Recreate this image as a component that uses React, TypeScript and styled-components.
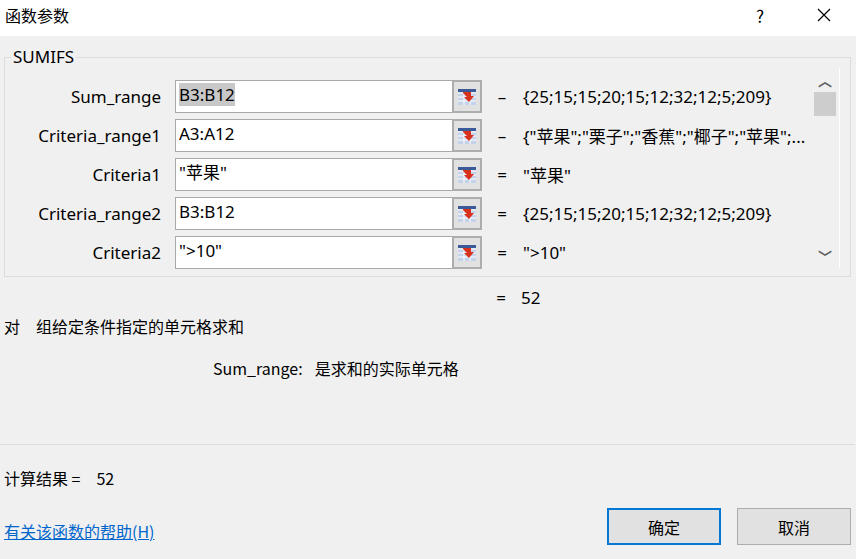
import React from "react";
import styled, { createGlobalStyle } from "styled-components";

const Global = createGlobalStyle`
  body { margin: 0; font-family: "Noto Sans CJK SC", "Noto Sans", sans-serif; color: #000; }
`;

const rows = [
  { label: "Sum_range", value: "B3:B12", sel: true, eq: "–", result: "{25;15;15;20;15;12;32;12;5;209}" },
  { label: "Criteria_range1", value: "A3:A12", eq: "–", result: "{\"苹果\";\"栗子\";\"香蕉\";\"椰子\";\"苹果\";..." },
  { label: "Criteria1", value: "\"苹果\"", eq: "=", result: "\"苹果\"" },
  { label: "Criteria_range2", value: "B3:B12", eq: "=", result: "{25;15;15;20;15;12;32;12;5;209}" },
  { label: "Criteria2", value: "\">10\"", eq: "=", result: "\">10\"" },
];

function RefIcon() {
  return (
    <svg width="20" height="20" viewBox="0 0 20 20">
      <rect x="1" y="2" width="18" height="16" fill="#c5d3ea" />
      <rect x="1" y="2" width="18" height="3" fill="#3a5a98" />
      {[6, 10, 14].map((y) => (
        <line key={y} x1="1" x2="19" y1={y} y2={y} stroke="#fff" />
      ))}
      {[7, 13].map((x) => (
        <line key={x} x1={x} x2={x} y1="5" y2="18" stroke="#fff" />
      ))}
      <path d="M6 5 L14 5 L14 9 L17 9 L12 15 L7 10 L10 10 L6 6 Z" fill="#d8321e" />
    </svg>
  );
}

export default function App() {
  return (
    <Dialog>
      <Global />
      <TitleBar>
        <Title>函数参数</Title>
        <TitleButtons>
          <TitleBtn>?</TitleBtn>
          <TitleBtn>
            <svg width="14" height="14" viewBox="0 0 14 14">
              <path d="M1 1 L13 13 M13 1 L1 13" stroke="#000" strokeWidth="1.2" />
            </svg>
          </TitleBtn>
        </TitleButtons>
      </TitleBar>
      <Body>
        <Group>
          <Legend>SUMIFS</Legend>
          <GroupInner>
            <Rows>
              {rows.map((r) => (
                <Row key={r.label}>
                  <Label>{r.label}</Label>
                  <InputBox>
                    <InputText $sel={r.sel}>{r.value}</InputText>
                  </InputBox>
                  <RefButton>
                    <RefIcon />
                  </RefButton>
                  <Eq>{r.eq}</Eq>
                  <Result>{r.result}</Result>
                </Row>
              ))}
            </Rows>
            <Scroll>
              <Arrow>︿</Arrow>
              <Thumb />
              <Spacer />
              <Arrow>﹀</Arrow>
            </Scroll>
          </GroupInner>
        </Group>
        <Total>
          <Eq>=</Eq>
          <span>52</span>
        </Total>
        <Desc>对　组给定条件指定的单元格求和</Desc>
        <ArgDesc>
          <span>Sum_range:</span>
          <span>是求和的实际单元格</span>
        </ArgDesc>
        <Sep />
        <CalcResult>计算结果 =　52</CalcResult>
        <Footer>
          <HelpLink>有关该函数的帮助(H)</HelpLink>
          <Buttons>
            <Btn $primary>确定</Btn>
            <Btn>取消</Btn>
          </Buttons>
        </Footer>
      </Body>
    </Dialog>
  );
}

const Dialog = styled.div`
  width: 856px;
  height: 559px;
  background: #f0f0f0;
  display: flex;
  flex-direction: column;
  overflow: hidden;
`;

const TitleBar = styled.div`
  height: 36px;
  background: #fff;
  display: flex;
  align-items: center;
  justify-content: space-between;
`;

const Title = styled.div`
  font-size: 16px;
  padding-left: 5px;
  margin-top: -6px;
`;

const TitleButtons = styled.div`
  display: flex;
  height: 100%;
  margin-top: -6px;
`;

const TitleBtn = styled.div`
  width: 64px;
  display: flex;
  align-items: center;
  justify-content: center;
  font-size: 17px;
`;

const Body = styled.div`
  flex: 1;
  display: flex;
  flex-direction: column;
  padding: 0 5px 0 4px;
`;

const Group = styled.div`
  position: relative;
  margin-top: 21px;
  border: 1px solid #dcdcdc;
  height: 220px;
  box-sizing: border-box;
`;

const Legend = styled.div`
  position: absolute;
  top: -13px;
  left: 6px;
  padding: 0 2px;
  background: #f0f0f0;
  font-family: "Noto Sans", sans-serif;
  font-size: 17px;
  line-height: 24px;
`;

const GroupInner = styled.div`
  display: flex;
  padding-top: 22px;
`;

const Rows = styled.div`
  flex: 1;
  display: flex;
  flex-direction: column;
  gap: 6px;
  height: 190px;
  overflow: hidden;
`;

const Row = styled.div`
  display: flex;
  align-items: center;
  height: 33px;
  flex-shrink: 0;
  font-family: "Noto Sans", "Noto Sans CJK SC", sans-serif;
  font-size: 17px;
`;

const Label = styled.div`
  width: 156px;
  text-align: right;
  padding-right: 14px;
  white-space: nowrap;
`;

const InputBox = styled.div`
  width: 277px;
  height: 33px;
  box-sizing: border-box;
  background: #fff;
  border: 1px solid #a9a9a9;
  border-right: none;
  padding: 2px 3px;
`;

const InputText = styled.span<{ $sel?: boolean }>`
  background: ${({ $sel }) => ($sel ? "#c8c8c8" : "transparent")};
  line-height: 22px;
`;

const RefButton = styled.div`
  width: 30px;
  height: 33px;
  box-sizing: border-box;
  border: 2px solid #adadad;
  background: #e1e1e1;
  display: flex;
  align-items: center;
  justify-content: center;
`;

const Eq = styled.div`
  width: 40px;
  text-align: center;
  font-family: "Noto Sans", sans-serif;
  font-size: 17px;
`;

const Result = styled.div`
  flex: 1;
  white-space: nowrap;
  overflow: hidden;
  padding-left: 1px;
`;

const Scroll = styled.div`
  width: 28px;
  margin: -12px 10px 0 0;
  height: 200px;
  display: flex;
  flex-direction: column;
  align-items: center;
  border-right: 1px solid #fff;
`;

const Arrow = styled.div`
  font-size: 14px;
  font-weight: bold;
  color: #606060;
  height: 24px;
  line-height: 24px;
`;

const Thumb = styled.div`
  width: 22px;
  height: 24px;
  background: #cdcdcd;
`;

const Spacer = styled.div`
  flex: 1;
`;

const Total = styled.div`
  display: flex;
  align-items: center;
  padding-left: 477px;
  margin-top: 8px;
  font-size: 17px;
  font-family: "Noto Sans", sans-serif;
  height: 24px;
`;

const Desc = styled.div`
  font-size: 16px;
  margin-top: 5px;
  height: 24px;
`;

const ArgDesc = styled.div`
  display: flex;
  gap: 12px;
  padding-left: 209px;
  margin-top: 18px;
  font-size: 16px;
`;

const Sep = styled.div`
  height: 1px;
  background: #dcdcdc;
  margin: 64px -4px 0 -4px;
`;

const CalcResult = styled.div`
  font-size: 16px;
  margin-top: 21px;
`;

const Footer = styled.div`
  display: flex;
  justify-content: space-between;
  align-items: center;
  margin-top: 18px;
`;

const HelpLink = styled.a`
  color: #0066cc;
  text-decoration: underline;
  font-size: 16px;
  margin-top: 8px;
`;

const Buttons = styled.div`
  display: flex;
  gap: 16px;
`;

const Btn = styled.div<{ $primary?: boolean }>`
  width: 114px;
  height: 37px;
  box-sizing: border-box;
  display: flex;
  align-items: center;
  justify-content: center;
  font-size: 16px;
  background: #e1e1e1;
  border: ${({ $primary }) => ($primary ? "2px solid #0078d7" : "1px solid #adadad")};
`;
